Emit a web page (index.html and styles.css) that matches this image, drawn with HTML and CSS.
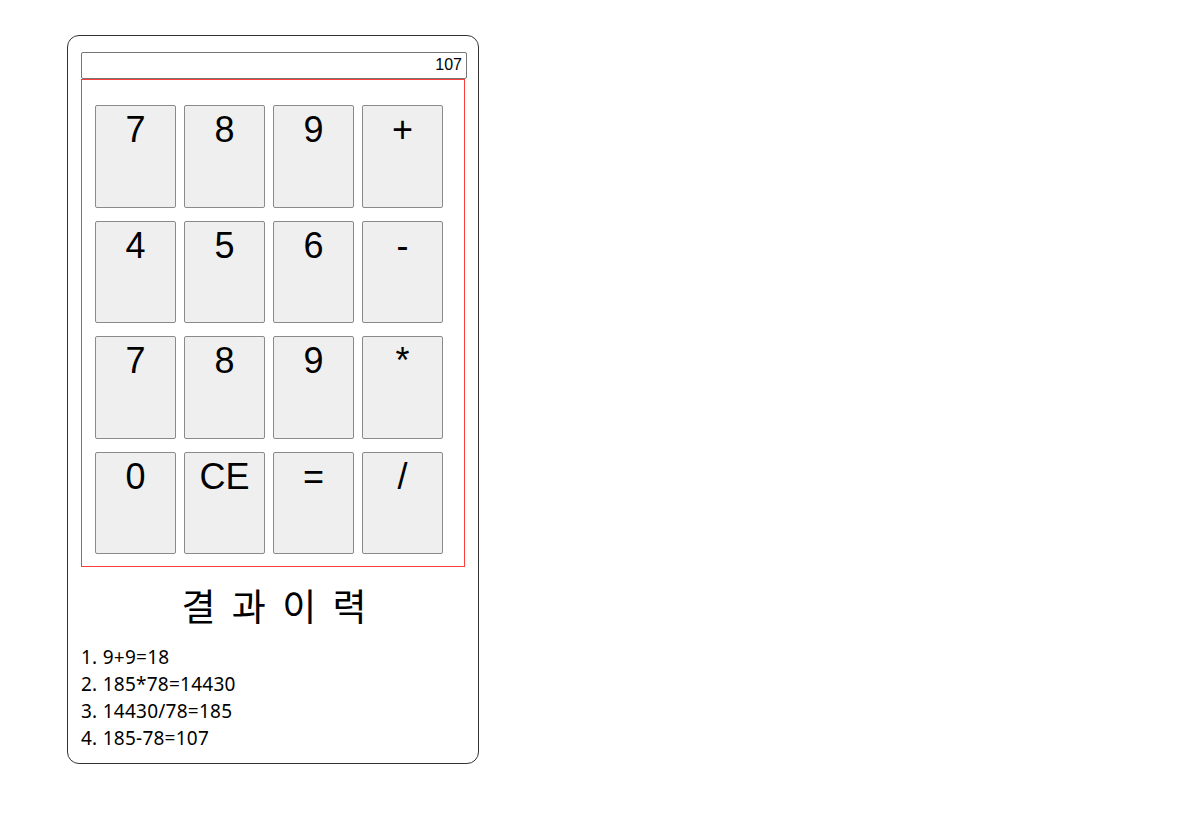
FILE: index.html
```html
<!DOCTYPE html>
<html lang="ko">
<head>
<meta charset="utf-8">
<title>계산기</title>
<link rel="stylesheet" href="styles.css">
</head>
<body>
<div class="calc">
  <input class="display" type="text" value="107" readonly>
  <div class="pad">
    <button class="key">7</button>
    <button class="key">8</button>
    <button class="key">9</button>
    <button class="key">+</button>
    <button class="key">4</button>
    <button class="key">5</button>
    <button class="key">6</button>
    <button class="key">-</button>
    <button class="key">7</button>
    <button class="key">8</button>
    <button class="key">9</button>
    <button class="key">*</button>
    <button class="key">0</button>
    <button class="key">CE</button>
    <button class="key">=</button>
    <button class="key">/</button>
  </div>
  <h2 class="history-title">결 과 이 력</h2>
  <ol class="history">
    <li>9+9=18</li>
    <li>185*78=14430</li>
    <li>14430/78=185</li>
    <li>185-78=107</li>
  </ol>
</div>
</body>
</html>
```

FILE: styles.css
```css
html, body {
  margin: 0;
  padding: 0;
  background: #ffffff;
}

body {
  padding: 35px 0 0 67px;
  font-family: "Liberation Sans", Arial, sans-serif;
}

.calc {
  box-sizing: border-box;
  width: 412px;
  height: 729px;
  border: 1px solid #333333;
  border-radius: 12px;
  padding: 16px 11px 0 13px;
}

.display {
  display: block;
  box-sizing: border-box;
  width: 386px;
  height: 27px;
  margin: 0;
  padding: 0 4px 1px 4px;
  border: 1px solid #767676;
  border-radius: 2px;
  font-family: "Liberation Sans", Arial, sans-serif;
  font-size: 16px;
  text-align: right;
  color: #000000;
  outline: none;
}

.pad {
  box-sizing: border-box;
  width: 384px;
  height: 488px;
  border: 1px solid #ff3b3b;
  padding: 25px 21px 0 13px;
  display: grid;
  grid-template-columns: repeat(4, 81px);
  grid-auto-rows: 102.5px;
  column-gap: 8px;
  row-gap: 13px;
  align-content: start;
}

.key {
  box-sizing: border-box;
  margin: 0;
  padding: 4px 0 0;
  border: 1px solid #8a8a8a;
  border-radius: 2px;
  background: #efefef;
  color: #000000;
  font-family: "Liberation Sans", Arial, sans-serif;
  font-size: 36px;
  line-height: 40px;
  display: flex;
  justify-content: center;
  align-items: flex-start;
}

.history-title {
  margin: 12px 0 0;
  text-align: center;
  font-family: "Noto Sans CJK KR", sans-serif;
  font-weight: 400;
  font-size: 37px;
  line-height: 52px;
  word-spacing: 6px;
  color: #000000;
}

.history {
  margin: 13px 0 0;
  padding: 0;
  list-style-position: inside;
  font-family: "Noto Sans", "Noto Sans CJK KR", sans-serif;
  font-size: 19px;
  line-height: 27px;
  letter-spacing: 0.25px;
  color: #000000;
}
```
